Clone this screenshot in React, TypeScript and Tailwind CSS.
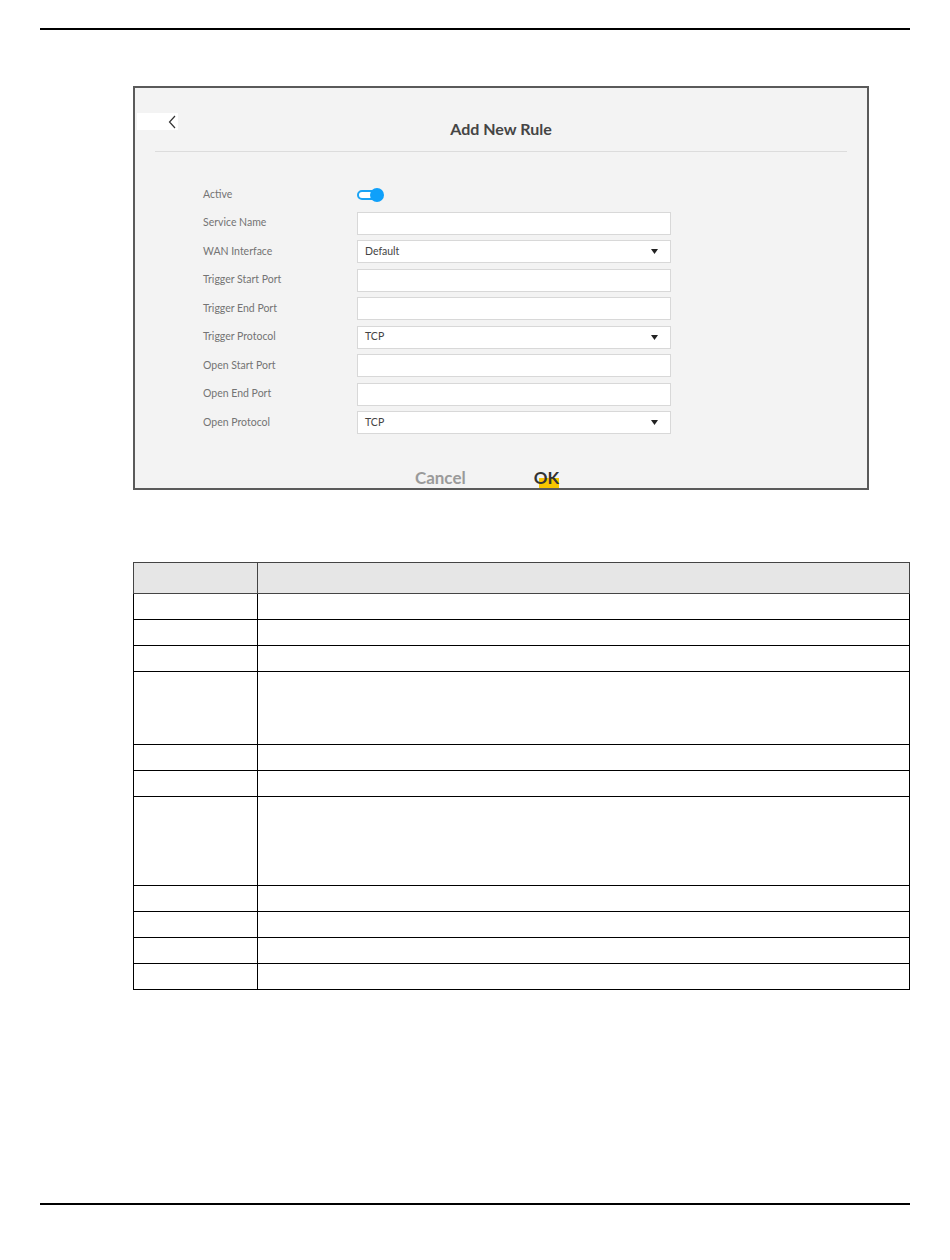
import React from 'react';

interface Field {
    label: string;
    kind: 'toggle' | 'text' | 'select';
    value?: string;
}

const fields: Field[] = [
    { label: 'Active', kind: 'toggle' },
    { label: 'Service Name', kind: 'text' },
    { label: 'WAN Interface', kind: 'select', value: 'Default' },
    { label: 'Trigger Start Port', kind: 'text' },
    { label: 'Trigger End Port', kind: 'text' },
    { label: 'Trigger Protocol', kind: 'select', value: 'TCP' },
    { label: 'Open Start Port', kind: 'text' },
    { label: 'Open End Port', kind: 'text' },
    { label: 'Open Protocol', kind: 'select', value: 'TCP' },
];

// row heights of the empty table under the screenshot
const rowHeights = [26, 26, 26, 73, 26, 26, 89, 26, 26, 26, 26];

const Toggle = () => (
    <div className="relative h-[14px] w-[27px]">
        <div className="absolute left-0 top-[2px] h-[10px] w-[22px] rounded-full border-2 border-[#1aa3f5] bg-white" />
        <div className="absolute right-0 top-0 h-[14px] w-[14px] rounded-full bg-[#0fa0fa]" />
    </div>
);

const FormRow = ({ field }: { field: Field }) => (
    <div className="flex h-[28.5px] items-center">
        <div className="w-[222px] shrink-0 pl-[68px] text-[10.5px] text-[#747474]">{field.label}</div>
        {field.kind === 'toggle' && <Toggle />}
        {field.kind === 'text' && (
            <div className="h-[23px] w-[314px] border border-[#d8d8d8] bg-white" />
        )}
        {field.kind === 'select' && (
            <div className="flex h-[23px] w-[314px] items-center justify-between border border-[#d8d8d8] bg-white pl-[7px] pr-[12px]">
                <span className="text-[10.5px] text-[#444]">{field.value}</span>
                <svg width="7" height="5" viewBox="0 0 7 5">
                    <path d="M0 0 L7 0 L3.5 5 Z" fill="#222" />
                </svg>
            </div>
        )}
    </div>
);

const App = () => {
    return (
        <div className="flex h-[1260px] w-[950px] flex-col bg-white" style={{ fontFamily: 'Lato, "Open Sans", sans-serif' }}>
            {/* top rule */}
            <div className="ml-[40px] mt-[28px] h-[2px] w-[870px] bg-black" />

            {/* screenshot of the Add New Rule dialog */}
            <div className="ml-[133px] mt-[56px] flex h-[404px] w-[736px] flex-col border-2 border-[#5a5a5a] bg-[#f3f3f3]">
                <div className="grid h-[63px] grid-cols-[1fr_auto_1fr]">
                    <div className="pt-[25px] pl-[2px]">
                        <div className="flex h-[17px] w-[41px] items-center justify-end bg-white pr-[2px]">
                            <svg width="8" height="14" viewBox="0 0 8 14">
                                <path d="M7 1 L1.5 7 L7 13" fill="none" stroke="#333" strokeWidth="1.2" />
                            </svg>
                        </div>
                    </div>
                    <div className="pt-[31px] text-[16px] font-bold leading-[20px] text-[#454545]">Add New Rule</div>
                    <div />
                </div>
                <div className="mx-[20px] h-px bg-[#dcdcdc]" />

                <div className="mt-[29px] flex flex-col">
                    {fields.map((f, i) => (
                        <FormRow key={i} field={f} />
                    ))}
                </div>

                <div className="mt-[31px] flex items-center justify-center gap-[68px] pr-[28px] text-[17px] font-bold leading-[20px]">
                    <span className="text-[#9a9a9a]">Cancel</span>
                    <span className="relative text-[#333]">
                        <span className="absolute left-[5px] top-[10px] h-[10px] w-[20px] bg-[#f7c600]" />
                        <span className="relative">OK</span>
                    </span>
                </div>
            </div>

            {/* empty description table */}
            <table className="ml-[133px] mt-[72px] w-[777px] border-collapse">
                <thead>
                    <tr className="h-[31px] bg-[#e6e6e6]">
                        <th className="w-[124px] border border-[#444]" />
                        <th className="border border-[#444]" />
                    </tr>
                </thead>
                <tbody>
                    {rowHeights.map((h, i) => (
                        <tr key={i} style={{ height: h }}>
                            <td className="border border-black" />
                            <td className="border border-black" />
                        </tr>
                    ))}
                </tbody>
            </table>

            {/* bottom rule */}
            <div className="ml-[40px] mt-auto mb-[55px] h-[2px] w-[870px] bg-black" />
        </div>
    );
};

export default App;
